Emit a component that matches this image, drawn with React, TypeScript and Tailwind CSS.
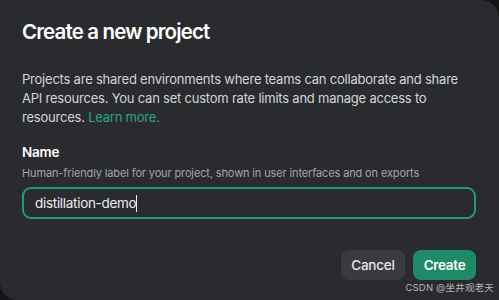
export default function App() {
  return (
    <main
      className="w-[499px] h-[300px] bg-[#151517] overflow-hidden"
      style={{ fontFamily: 'Inter, "Noto Sans CJK SC", sans-serif' }}
    >
      <div className="relative w-full h-full bg-[#2a2b2f] rounded-tr-[18px] rounded-bl-[18px] px-[22px] pt-[18px]">
        {/* Title */}
        <h1 className="text-[20.5px] leading-[28px] font-semibold text-white tracking-[-0.85px]">
          Create a new project
        </h1>

        {/* Description */}
        <p className="mt-[24px] w-[445px] text-[13px] leading-[19px] text-[#d4d4d8] tracking-[-0.22px]">
          Projects are shared environments where teams can collaborate and share
          API resources. You can set custom rate limits and manage access to
          resources. <span className="text-[#2aa57f]">Learn more.</span>
        </p>

        {/* Name field */}
        <div className="mt-[15px]">
          <label className="block text-[13.5px] leading-[20px] font-semibold text-white tracking-[-0.2px]">
            Name
          </label>
          <p className="mt-[3px] text-[11px] leading-[17px] text-[#a3a3a8] tracking-[-0.13px]">
            Human-friendly label for your project, shown in user interfaces and on exports
          </p>
          <div className="mt-[5px] h-[32px] w-[454px] rounded-[9px] border-2 border-[#1f9c78] flex items-center px-[11px]">
            <span className="text-[13.5px] text-[#ececf1] tracking-[-0.3px]">distillation-demo</span>
            <span className="w-px h-[17px] bg-[#ececf1]" />
          </div>
        </div>

        {/* Actions */}
        <div className="mt-[31px] w-[454px] flex justify-end gap-[8px]">
          <button className="h-[30px] w-[64px] rounded-[8px] bg-[#3a3b42] text-[13.5px] font-medium text-[#e5e5ea] tracking-[-0.2px]">
            Cancel
          </button>
          <button className="h-[30px] w-[63px] rounded-[8px] bg-[#1e8a67] text-[13.5px] font-semibold text-white tracking-[-0.3px]">
            Create
          </button>
        </div>

        {/* Watermark */}
        <span className="absolute right-[5px] bottom-[6px] text-[9.5px] leading-[12px] text-[#b5b5b8] tracking-[0.2px]">
          CSDN @坐井观老天
        </span>
      </div>
    </main>
  );
}
